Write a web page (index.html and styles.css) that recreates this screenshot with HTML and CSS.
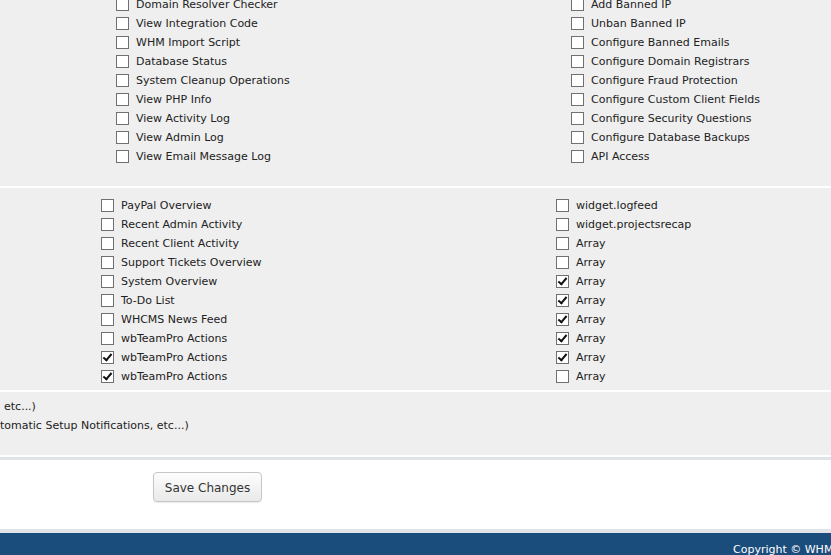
FILE: index.html
```html
<!DOCTYPE html>
<html lang="en">
<head>
<meta charset="UTF-8">
<meta name="viewport" content="width=device-width, initial-scale=1.0">
<title>Admin Role Permissions</title>
<link rel="stylesheet" href="styles.css">
</head>
<body>

<div class="page">
  <div class="fieldarea perms">
    <ul class="col">
      <li><span class="box"></span>Domain Resolver Checker</li>
      <li><span class="box"></span>View Integration Code</li>
      <li><span class="box"></span>WHM Import Script</li>
      <li><span class="box"></span>Database Status</li>
      <li><span class="box"></span>System Cleanup Operations</li>
      <li><span class="box"></span>View PHP Info</li>
      <li><span class="box"></span>View Activity Log</li>
      <li><span class="box"></span>View Admin Log</li>
      <li><span class="box"></span>View Email Message Log</li>
    </ul>
    <ul class="col">
      <li><span class="box"></span>Add Banned IP</li>
      <li><span class="box"></span>Unban Banned IP</li>
      <li><span class="box"></span>Configure Banned Emails</li>
      <li><span class="box"></span>Configure Domain Registrars</li>
      <li><span class="box"></span>Configure Fraud Protection</li>
      <li><span class="box"></span>Configure Custom Client Fields</li>
      <li><span class="box"></span>Configure Security Questions</li>
      <li><span class="box"></span>Configure Database Backups</li>
      <li><span class="box"></span>API Access</li>
    </ul>
  </div>

  <div class="fieldarea widgets">
    <ul class="col">
      <li><span class="box"></span>PayPal Overview</li>
      <li><span class="box"></span>Recent Admin Activity</li>
      <li><span class="box"></span>Recent Client Activity</li>
      <li><span class="box"></span>Support Tickets Overview</li>
      <li><span class="box"></span>System Overview</li>
      <li><span class="box"></span>To-Do List</li>
      <li><span class="box"></span>WHCMS News Feed</li>
      <li><span class="box"></span>wbTeamPro Actions</li>
      <li><span class="box checked"></span>wbTeamPro Actions</li>
      <li><span class="box checked"></span>wbTeamPro Actions</li>
    </ul>
    <ul class="col">
      <li><span class="box"></span>widget.logfeed</li>
      <li><span class="box"></span>widget.projectsrecap</li>
      <li><span class="box"></span>Array</li>
      <li><span class="box"></span>Array</li>
      <li><span class="box checked"></span>Array</li>
      <li><span class="box checked"></span>Array</li>
      <li><span class="box checked"></span>Array</li>
      <li><span class="box checked"></span>Array</li>
      <li><span class="box checked"></span>Array</li>
      <li><span class="box"></span>Array</li>
    </ul>
  </div>

  <div class="fieldarea notices">
    <p class="first">etc...)</p>
    <p>tomatic Setup Notifications, etc...)</p>
  </div>

  <div class="btn-row">
    <button type="button" class="btn">Save Changes</button>
  </div>
</div>

<div class="footer">
  <span>Copyright &copy; WHMCS 2014. All Rights Reserved.</span>
</div>

</body>
</html>
```

FILE: styles.css
```css
body {
  margin: 0;
  padding: 0;
  background-color: #fff;
  font-family: "DejaVu Sans", Verdana, sans-serif;
  font-size: 11px;
  color: #222;
  overflow: hidden;
}
.page {
  margin-top: -11px;
}
.fieldarea {
  background-color: #efefef;
  border-bottom: 2px solid #fff;
  display: flex;
}
.perms {
  padding: 6px 0 20px 116px;
}
.widgets {
  padding: 8px 0 4px 101px;
}
.col {
  list-style: none;
  margin: 0;
  padding: 0;
  width: 455px;
  flex-shrink: 0;
}
.col li {
  height: 19px;
  display: flex;
  align-items: center;
  white-space: nowrap;
}
.box {
  width: 11px;
  height: 11px;
  border: 1px solid #707070;
  background-color: #fff;
  margin-right: 7px;
  flex-shrink: 0;
  position: relative;
}
.box.checked::after {
  content: "";
  position: absolute;
  left: 3px;
  top: 0;
  width: 3px;
  height: 7px;
  border: solid #111;
  border-width: 0 2px 2px 0;
  transform: rotate(40deg);
}
.notices {
  display: block;
  padding: 5px 0 20px 0;
}
.notices p {
  margin: 0;
  height: 19px;
  line-height: 19px;
  white-space: nowrap;
}
.notices .first {
  padding-left: 4px;
}
.btn-row {
  border-top: 3px solid #e1e4e6;
  padding: 12px 0 27px 153px;
}
.btn {
  font-family: "DejaVu Sans", Verdana, sans-serif;
  font-size: 12px;
  color: #333;
  width: 109px;
  height: 30px;
  padding-top: 3px;
  background: linear-gradient(#fdfdfd, #e9e9e9);
  border: 1px solid #c6c6c6;
  border-radius: 4px;
  box-shadow: 0 1px 1px rgba(0, 0, 0, 0.08);
  cursor: pointer;
}
.footer {
  border-top: 4px solid #e1e4e6;
  background-color: #1a4c7c;
  color: #fff;
  height: 40px;
  padding-left: 733px;
  font-size: 11px;
  line-height: 34px;
  white-space: nowrap;
}
```
